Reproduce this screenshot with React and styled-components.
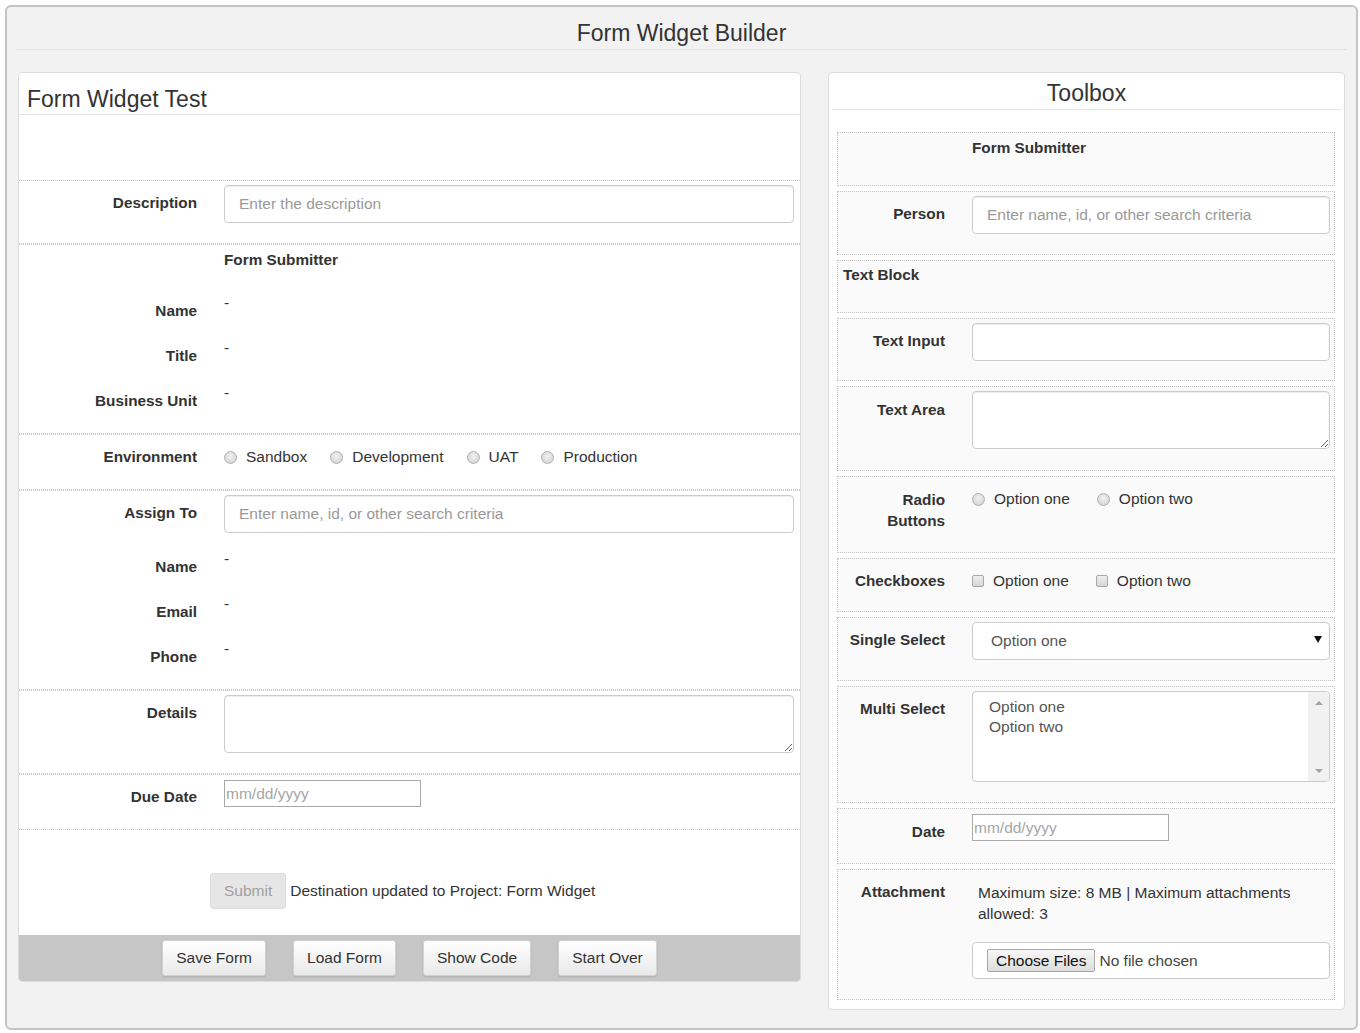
import React from 'react';
import styled, { createGlobalStyle } from 'styled-components';

const GlobalStyle = createGlobalStyle`
  html, body { margin: 0; padding: 0; background: #fff; }
  body {
    font-family: "Liberation Sans", Arial, Helvetica, sans-serif;
    color: #333;
    font-size: 15.5px;
  }
  *, *::before, *::after { box-sizing: border-box; }
`;

const Page = styled.div`
  padding: 5px 2px 4px 5px;
`;

const Frame = styled.div`
  width: 1353px;
  height: 1025px;
  border: 2px solid #c4c4c4;
  border-radius: 6px;
  background: #f2f2f2;
  display: flex;
  flex-direction: column;
`;

const Header = styled.h1`
  margin: 0 9px;
  padding: 12px 0 2px;
  font-size: 23px;
  font-weight: normal;
  line-height: 28px;
  text-align: center;
  color: #333;
  border-bottom: 1px solid #e2e2e2;
`;

const Columns = styled.div`
  display: flex;
  align-items: flex-start;
  gap: 27px;
  margin-top: 22px;
  padding: 0 10px 0 11px;
`;

const Panel = styled.section`
  width: ${p => p.$width}px;
  flex: none;
  background: #fff;
  border: 1px solid #dcdcdc;
  border-radius: 4px;
  overflow: hidden;
`;

const PanelTitle = styled.h2`
  margin: 0 ${p => p.$inset}px;
  padding: ${p => p.$pt}px 8px ${p => p.$pb}px;
  font-size: 23px;
  font-weight: normal;
  line-height: 28px;
  text-align: ${p => p.$align};
  color: #333;
  border-bottom: 1px solid #e5e5e5;
`;

const Spacer = styled.div`
  height: ${p => p.$h}px;
`;

const FormRow = styled.div`
  border-top: 1px dotted #c6c6c6;
  border-bottom: 1px dotted #c6c6c6;
  background: #fff;
  padding: 4px 6px ${p => p.$pb ?? 20}px 0;
`;

const FieldGrid = styled.div`
  display: grid;
  grid-template-columns: ${p => p.$labelWidth}px 1fr;
  column-gap: 12px;
  align-items: start;
  min-height: ${p => p.$h || 0}px;
`;

const FieldLabel = styled.div`
  font-size: 15.3px;
  font-weight: bold;
  color: #333;
  line-height: ${p => p.$lh || 20}px;
  padding-top: ${p => p.$pt ?? 8}px;
  padding-right: 15px;
  padding-left: ${p => p.$pl || 0}px;
  text-align: ${p => p.$align || 'right'};
`;

const FieldBody = styled.div`
  min-width: 0;
  padding-top: ${p => p.$pt || 0}px;
`;

const StaticHeading = styled.div`
  font-size: 15.3px;
  font-weight: bold;
  line-height: 20px;
  padding-top: ${p => p.$pt || 0}px;
  min-height: ${p => p.$h || 0}px;
`;

const Dash = styled.div`
  line-height: 20px;
  padding-top: 5px;
  font-size: 15.5px;
`;

const InfoList = styled.div`
  margin-top: ${p => p.$mt || 0}px;
`;

const fieldBase = `
  display: block;
  width: 100%;
  font-family: "Liberation Sans", Arial, Helvetica, sans-serif;
  font-size: 15.5px;
  color: #555;
  background: #fff;
  border: 1px solid #ccc;
  border-radius: 4px;
  box-shadow: inset 0 1px 1px rgba(0, 0, 0, 0.075);
  outline: none;
  &::placeholder { color: #999; opacity: 1; }
`;

const TextInput = styled.input`
  ${fieldBase}
  height: 38px;
  padding: 0 14px;
`;

const TextArea = styled.textarea`
  ${fieldBase}
  height: 58px;
  padding: 6px 14px;
  resize: vertical;
  margin: 0;
`;

const DateInput = styled.input`
  display: block;
  width: 197px;
  height: 27px;
  margin-top: 1px;
  padding: 0 1px;
  font-family: "Liberation Sans", Arial, Helvetica, sans-serif;
  font-size: 15.5px;
  border: 1px solid #a9a9a9;
  border-radius: 0;
  background: #fff;
  outline: none;
  &::placeholder { color: #a6a6a6; opacity: 1; }
`;

const RadioGroup = styled.div`
  display: flex;
  align-items: center;
  gap: ${p => p.$gap}px;
  padding-top: 8px;
  line-height: 20px;
`;

const OptionLabel = styled.label`
  display: flex;
  align-items: center;
  gap: 9px;
  color: #333;
  font-size: 15.5px;
  white-space: nowrap;
`;

const RadioDot = styled.span`
  width: 13px;
  height: 13px;
  flex: none;
  border-radius: 50%;
  border: 1px solid #b0b0b0;
  background: radial-gradient(circle at 50% 40%, #f2f2f2 0%, #dcdcdc 60%, #cfcfcf 100%);
`;

const CheckBox = styled.span`
  width: 12px;
  height: 12px;
  flex: none;
  border-radius: 2px;
  border: 1px solid #a8a8a8;
  background: linear-gradient(#eeeeee, #d6d6d6);
`;

const SubmitArea = styled.div`
  display: flex;
  align-items: center;
  gap: 4px;
  padding: 43px 0 26px 191px;
`;

const SubmitButton = styled.button`
  height: 36px;
  padding: 0 13px;
  font-family: inherit;
  font-size: 15.5px;
  color: #a0a0a0;
  background: #e6e6e6;
  border: 1px solid #dcdcdc;
  border-radius: 3px;
`;

const Message = styled.span`
  font-size: 15.5px;
  color: #333;
`;

const Footer = styled.div`
  display: flex;
  justify-content: center;
  gap: 27px;
  height: 46px;
  padding-top: 5px;
  background: #c6c6c6;
`;

const ActionButton = styled.button`
  height: 36px;
  padding: 0 13px;
  font-family: inherit;
  font-size: 15.5px;
  color: #333;
  background: linear-gradient(#ffffff, #e9e9e9);
  border: 1px solid #d2d2d2;
  border-radius: 3px;
  box-shadow: 0 1px 2px rgba(0, 0, 0, 0.12);
`;

const ToolList = styled.div`
  display: flex;
  flex-direction: column;
  gap: 5px;
  padding: 22px 9px 9px 8px;
`;

const ToolItem = styled.div`
  border: 1px dotted #c4c4c4;
  background: #fafafa;
  padding: 4px 4px ${p => p.$pb ?? 20}px 0;
`;

const SelectBox = styled.div`
  display: flex;
  align-items: center;
  justify-content: space-between;
  height: 38px;
  padding: 0 7px 0 18px;
  border: 1px solid #ccc;
  border-radius: 4px;
  background: #fff;
  color: #555;
  font-size: 15.5px;
`;

const Caret = styled.span`
  width: 0;
  height: 0;
  margin-top: -4px;
  border-left: 4px solid transparent;
  border-right: 4px solid transparent;
  border-top: 7px solid #111;
`;

const MultiBox = styled.div`
  display: flex;
  height: 91px;
  border: 1px solid #ccc;
  border-radius: 4px;
  background: #fff;
  overflow: hidden;
`;

const MultiOptions = styled.div`
  flex: 1;
  padding: 5px 16px;
  line-height: 20px;
  color: #555;
  font-size: 15.5px;
`;

const ScrollTrack = styled.div`
  width: 21px;
  flex: none;
  background: #f1f1f1;
  display: flex;
  flex-direction: column;
  justify-content: space-between;
  align-items: center;
  padding: 9px 0 8px;
`;

const ScrollArrow = styled.span`
  width: 0;
  height: 0;
  border-left: 4px solid transparent;
  border-right: 4px solid transparent;
  ${p => p.$up ? 'border-bottom: 4px solid #a3a3a3;' : 'border-top: 4px solid #a3a3a3;'}
`;

const AttachNote = styled.div`
  margin-top: 8px;
  padding-left: 6px;
  line-height: 21px;
  color: #333;
  font-size: 15.5px;
`;

const FileBox = styled.div`
  display: flex;
  align-items: center;
  gap: 4px;
  height: 37px;
  margin-top: 18px;
  padding-left: 14px;
  border: 1px solid #ccc;
  border-radius: 4px;
  background: #fff;
  font-size: 15.5px;
`;

const ChooseButton = styled.span`
  display: inline-flex;
  align-items: center;
  height: 23px;
  padding: 0 8px;
  border: 1px solid #a6a6a6;
  border-radius: 2px;
  background: linear-gradient(#f7f7f7, #dddddd);
  color: #111;
`;

const NoFile = styled.span`
  color: #444;
`;

const LEFT_LABEL = 193;
const TOOL_LABEL = 122;

function InfoLine({ label }) {
  return (
    <FieldGrid $labelWidth={LEFT_LABEL} $h={45}>
      <FieldLabel $pt={13}>{label}</FieldLabel>
      <Dash>-</Dash>
    </FieldGrid>
  );
}

function Radio({ children }) {
  return (
    <OptionLabel>
      <RadioDot />
      {children}
    </OptionLabel>
  );
}

function Check({ children }) {
  return (
    <OptionLabel>
      <CheckBox />
      {children}
    </OptionLabel>
  );
}

function LeftPanel() {
  return (
    <Panel $width={783}>
      <PanelTitle $inset={0} $pt={12} $pb={1} $align="left">Form Widget Test</PanelTitle>
      <Spacer $h={65} />

      <FormRow>
        <FieldGrid $labelWidth={LEFT_LABEL}>
          <FieldLabel>Description</FieldLabel>
          <TextInput placeholder="Enter the description" />
        </FieldGrid>
      </FormRow>

      <FormRow $pb={10}>
        <FieldGrid $labelWidth={LEFT_LABEL}>
          <span />
          <StaticHeading $pt={1} $h={39}>Form Submitter</StaticHeading>
        </FieldGrid>
        <InfoLine label="Name" />
        <InfoLine label="Title" />
        <InfoLine label="Business Unit" />
      </FormRow>

      <FormRow $pb={22}>
        <FieldGrid $labelWidth={LEFT_LABEL}>
          <FieldLabel>Environment</FieldLabel>
          <RadioGroup $gap={23}>
            <Radio>Sandbox</Radio>
            <Radio>Development</Radio>
            <Radio>UAT</Radio>
            <Radio>Production</Radio>
          </RadioGroup>
        </FieldGrid>
      </FormRow>

      <FormRow $pb={10}>
        <FieldGrid $labelWidth={LEFT_LABEL}>
          <FieldLabel>Assign To</FieldLabel>
          <TextInput placeholder="Enter name, id, or other search criteria" />
        </FieldGrid>
        <InfoList $mt={11}>
          <InfoLine label="Name" />
          <InfoLine label="Email" />
          <InfoLine label="Phone" />
        </InfoList>
      </FormRow>

      <FormRow>
        <FieldGrid $labelWidth={LEFT_LABEL}>
          <FieldLabel>Details</FieldLabel>
          <TextArea />
        </FieldGrid>
      </FormRow>

      <FormRow $pb={22}>
        <FieldGrid $labelWidth={LEFT_LABEL}>
          <FieldLabel>Due Date</FieldLabel>
          <DateInput placeholder="mm/dd/yyyy" />
        </FieldGrid>
      </FormRow>

      <SubmitArea>
        <SubmitButton disabled>Submit</SubmitButton>
        <Message>Destination updated to Project: Form Widget</Message>
      </SubmitArea>

      <Footer>
        <ActionButton>Save Form</ActionButton>
        <ActionButton>Load Form</ActionButton>
        <ActionButton>Show Code</ActionButton>
        <ActionButton>Start Over</ActionButton>
      </Footer>
    </Panel>
  );
}

function RightPanel() {
  return (
    <Panel $width={517}>
      <PanelTitle $inset={3} $pt={6} $pb={2} $align="center">Toolbox</PanelTitle>
      <ToolList>
        <ToolItem $pb={27}>
          <FieldGrid $labelWidth={TOOL_LABEL}>
            <span />
            <StaticHeading $pt={1}>Form Submitter</StaticHeading>
          </FieldGrid>
        </ToolItem>

        <ToolItem>
          <FieldGrid $labelWidth={TOOL_LABEL}>
            <FieldLabel>Person</FieldLabel>
            <TextInput placeholder="Enter name, id, or other search criteria" />
          </FieldGrid>
        </ToolItem>

        <ToolItem $pb={27}>
          <FieldLabel $pt={0} $pl={5} $align="left">Text Block</FieldLabel>
        </ToolItem>

        <ToolItem $pb={19}>
          <FieldGrid $labelWidth={TOOL_LABEL}>
            <FieldLabel>Text Input</FieldLabel>
            <TextInput />
          </FieldGrid>
        </ToolItem>

        <ToolItem $pb={21}>
          <FieldGrid $labelWidth={TOOL_LABEL}>
            <FieldLabel $pt={9}>Text Area</FieldLabel>
            <TextArea />
          </FieldGrid>
        </ToolItem>

        <ToolItem $pb={21}>
          <FieldGrid $labelWidth={TOOL_LABEL}>
            <FieldLabel $lh={21}>Radio<br />Buttons</FieldLabel>
            <RadioGroup $gap={27}>
              <Radio>Option one</Radio>
              <Radio>Option two</Radio>
            </RadioGroup>
          </FieldGrid>
        </ToolItem>

        <ToolItem $pb={20}>
          <FieldGrid $labelWidth={TOOL_LABEL}>
            <FieldLabel>Checkboxes</FieldLabel>
            <RadioGroup $gap={27}>
              <Check>Option one</Check>
              <Check>Option two</Check>
            </RadioGroup>
          </FieldGrid>
        </ToolItem>

        <ToolItem>
          <FieldGrid $labelWidth={TOOL_LABEL}>
            <FieldLabel>Single Select</FieldLabel>
            <SelectBox>
              <span>Option one</span>
              <Caret />
            </SelectBox>
          </FieldGrid>
        </ToolItem>

        <ToolItem $pb={20}>
          <FieldGrid $labelWidth={TOOL_LABEL}>
            <FieldLabel>Multi Select</FieldLabel>
            <MultiBox>
              <MultiOptions>
                <div>Option one</div>
                <div>Option two</div>
              </MultiOptions>
              <ScrollTrack>
                <ScrollArrow $up />
                <ScrollArrow />
              </ScrollTrack>
            </MultiBox>
          </FieldGrid>
        </ToolItem>

        <ToolItem $pb={21}>
          <FieldGrid $labelWidth={TOOL_LABEL}>
            <FieldLabel $pt={9}>Date</FieldLabel>
            <DateInput placeholder="mm/dd/yyyy" />
          </FieldGrid>
        </ToolItem>

        <ToolItem>
          <FieldGrid $labelWidth={TOOL_LABEL}>
            <FieldLabel>Attachment</FieldLabel>
            <FieldBody>
              <AttachNote>Maximum size: 8 MB | Maximum attachments allowed: 3</AttachNote>
              <FileBox>
                <ChooseButton>Choose Files</ChooseButton>
                <NoFile>No file chosen</NoFile>
              </FileBox>
            </FieldBody>
          </FieldGrid>
        </ToolItem>
      </ToolList>
    </Panel>
  );
}

export default function App() {
  return (
    <>
      <GlobalStyle />
      <Page>
        <Frame>
          <Header>Form Widget Builder</Header>
          <Columns>
            <LeftPanel />
            <RightPanel />
          </Columns>
        </Frame>
      </Page>
    </>
  );
}
